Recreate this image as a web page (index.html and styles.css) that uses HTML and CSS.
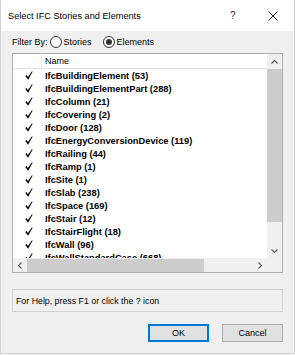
FILE: index.html
```html
<!DOCTYPE html>
<html>
<head>
<meta charset="utf-8">
<link rel="stylesheet" href="styles.css">
</head>
<body>
<div class="window">
  <div class="titlebar">
    <span class="title">Select IFC Stories and Elements</span>
    <span class="tb-help">?</span>
    <span class="tb-close"><svg width="10" height="10" viewBox="0 0 10 10"><path d="M0.5 0.5 L9.5 9.5 M9.5 0.5 L0.5 9.5" stroke="#1a1a1a" stroke-width="1" fill="none"/></svg></span>
  </div>
  <div class="content">
    <div class="filter">
      <span class="filter-label">Filter By:</span>
      <span class="radio"></span><span class="radio-label">Stories</span>
      <span class="radio checked"></span><span class="radio-label">Elements</span>
    </div>
    <div class="list">
      <div class="list-main">
        <div class="list-header">
          <div class="col-check"></div>
          <div class="col-name">Name</div>
        </div>
        <div class="rows">
          <div class="row"><span class="chk"><svg width="8" height="9" viewBox="0 0 8 9"><path d="M0.3 5 L1.6 4.1 L2.9 6.1 L7 0.2 L7.6 0.7 L3.1 8.8 Z" fill="#000"/></svg></span><span>IfcBuildingElement (53)</span></div>
          <div class="row"><span class="chk"><svg width="8" height="9" viewBox="0 0 8 9"><path d="M0.3 5 L1.6 4.1 L2.9 6.1 L7 0.2 L7.6 0.7 L3.1 8.8 Z" fill="#000"/></svg></span><span>IfcBuildingElementPart (288)</span></div>
          <div class="row"><span class="chk"><svg width="8" height="9" viewBox="0 0 8 9"><path d="M0.3 5 L1.6 4.1 L2.9 6.1 L7 0.2 L7.6 0.7 L3.1 8.8 Z" fill="#000"/></svg></span><span>IfcColumn (21)</span></div>
          <div class="row"><span class="chk"><svg width="8" height="9" viewBox="0 0 8 9"><path d="M0.3 5 L1.6 4.1 L2.9 6.1 L7 0.2 L7.6 0.7 L3.1 8.8 Z" fill="#000"/></svg></span><span>IfcCovering (2)</span></div>
          <div class="row"><span class="chk"><svg width="8" height="9" viewBox="0 0 8 9"><path d="M0.3 5 L1.6 4.1 L2.9 6.1 L7 0.2 L7.6 0.7 L3.1 8.8 Z" fill="#000"/></svg></span><span>IfcDoor (128)</span></div>
          <div class="row"><span class="chk"><svg width="8" height="9" viewBox="0 0 8 9"><path d="M0.3 5 L1.6 4.1 L2.9 6.1 L7 0.2 L7.6 0.7 L3.1 8.8 Z" fill="#000"/></svg></span><span>IfcEnergyConversionDevice (119)</span></div>
          <div class="row"><span class="chk"><svg width="8" height="9" viewBox="0 0 8 9"><path d="M0.3 5 L1.6 4.1 L2.9 6.1 L7 0.2 L7.6 0.7 L3.1 8.8 Z" fill="#000"/></svg></span><span>IfcRailing (44)</span></div>
          <div class="row"><span class="chk"><svg width="8" height="9" viewBox="0 0 8 9"><path d="M0.3 5 L1.6 4.1 L2.9 6.1 L7 0.2 L7.6 0.7 L3.1 8.8 Z" fill="#000"/></svg></span><span>IfcRamp (1)</span></div>
          <div class="row"><span class="chk"><svg width="8" height="9" viewBox="0 0 8 9"><path d="M0.3 5 L1.6 4.1 L2.9 6.1 L7 0.2 L7.6 0.7 L3.1 8.8 Z" fill="#000"/></svg></span><span>IfcSite (1)</span></div>
          <div class="row"><span class="chk"><svg width="8" height="9" viewBox="0 0 8 9"><path d="M0.3 5 L1.6 4.1 L2.9 6.1 L7 0.2 L7.6 0.7 L3.1 8.8 Z" fill="#000"/></svg></span><span>IfcSlab (238)</span></div>
          <div class="row"><span class="chk"><svg width="8" height="9" viewBox="0 0 8 9"><path d="M0.3 5 L1.6 4.1 L2.9 6.1 L7 0.2 L7.6 0.7 L3.1 8.8 Z" fill="#000"/></svg></span><span>IfcSpace (169)</span></div>
          <div class="row"><span class="chk"><svg width="8" height="9" viewBox="0 0 8 9"><path d="M0.3 5 L1.6 4.1 L2.9 6.1 L7 0.2 L7.6 0.7 L3.1 8.8 Z" fill="#000"/></svg></span><span>IfcStair (12)</span></div>
          <div class="row"><span class="chk"><svg width="8" height="9" viewBox="0 0 8 9"><path d="M0.3 5 L1.6 4.1 L2.9 6.1 L7 0.2 L7.6 0.7 L3.1 8.8 Z" fill="#000"/></svg></span><span>IfcStairFlight (18)</span></div>
          <div class="row"><span class="chk"><svg width="8" height="9" viewBox="0 0 8 9"><path d="M0.3 5 L1.6 4.1 L2.9 6.1 L7 0.2 L7.6 0.7 L3.1 8.8 Z" fill="#000"/></svg></span><span>IfcWall (96)</span></div>
          <div class="row"><span class="chk"><svg width="8" height="9" viewBox="0 0 8 9"><path d="M0.3 5 L1.6 4.1 L2.9 6.1 L7 0.2 L7.6 0.7 L3.1 8.8 Z" fill="#000"/></svg></span><span>IfcWallStandardCase (668)</span></div>
        </div>
      </div>
      <div class="vscroll">
        <span class="arrow"><svg width="7" height="4" viewBox="0 0 7 4"><path d="M0.5 3.5 L3.5 0.5 L6.5 3.5" stroke="#606060" stroke-width="1.2" fill="none"/></svg></span>
        <div class="vtrack"><div class="vthumb"></div></div>
        <span class="arrow"><svg width="7" height="4" viewBox="0 0 7 4"><path d="M0.5 0.5 L3.5 3.5 L6.5 0.5" stroke="#606060" stroke-width="1.2" fill="none"/></svg></span>
      </div>
      <div class="hscroll">
        <span class="harrow"><svg width="4" height="7" viewBox="0 0 4 7"><path d="M3.5 0.5 L0.5 3.5 L3.5 6.5" stroke="#606060" stroke-width="1.2" fill="none"/></svg></span>
        <div class="htrack"><div class="hthumb"></div></div>
        <span class="harrow"><svg width="4" height="7" viewBox="0 0 4 7"><path d="M0.5 0.5 L3.5 3.5 L0.5 6.5" stroke="#606060" stroke-width="1.2" fill="none"/></svg></span>
      </div>
      <div class="corner"></div>
    </div>
    <div class="helpbox">For Help, press F1 or click the ? icon</div>
    <div class="buttons">
      <button class="btn default">OK</button>
      <button class="btn">Cancel</button>
    </div>
  </div>
</div>
</body>
</html>
```

FILE: styles.css
```css
* { box-sizing: border-box; }
html, body { margin: 0; padding: 0; }
body {
  width: 295px;
  height: 355px;
  background: #f0f0f0;
  font-family: "Liberation Sans", Arial, sans-serif;
  font-size: 9px;
  color: #000;
  overflow: hidden;
}
.window {
  width: 295px;
  height: 354px;
  background: #f0f0f0;
  border-left: 1px solid #d4d4d4;
  border-right: 1px solid #d4d4d4;
  border-bottom: 1px solid #d4d4d4;
  display: flex;
  flex-direction: column;
}
.titlebar {
  height: 31px;
  background: #fff;
  display: flex;
  align-items: center;
  padding-left: 7px;
}
.title {
  font-size: 9.2px;
  color: #000;
  flex: 1;
}
.tb-help {
  font-size: 10px;
  color: #333;
  width: 10px;
  margin-right: 28px;
}
.tb-close {
  display: flex;
  margin-right: 16px;
}
.content {
  padding: 0 11px;
  display: flex;
  flex-direction: column;
}
.filter {
  height: 22px;
  display: flex;
  align-items: center;
}
.filter-label { margin-right: 2px; }
.radio {
  width: 12px;
  height: 12px;
  border: 1px solid #333;
  border-radius: 50%;
  background: #fff;
  display: inline-flex;
  align-items: center;
  justify-content: center;
  margin-right: 2px;
}
.radio.checked::after {
  content: "";
  width: 6px;
  height: 6px;
  border-radius: 50%;
  background: #333;
}
.radio-label { margin-right: 11px; }
.list {
  height: 220px;
  border: 1px solid #adadad;
  background: #fff;
  display: grid;
  grid-template-columns: 1fr 15px;
  grid-template-rows: 1fr 14px;
}
.list-main {
  overflow: hidden;
  background: #fff;
}
.list-header {
  height: 15px;
  display: flex;
  border-bottom: 1px solid #e5e5e5;
}
.col-check {
  width: 29px;
  border-right: 1px solid #e5e5e5;
  margin: 1px 0;
}
.col-name {
  padding-left: 3px;
  font-size: 9px;
  line-height: 14px;
  color: #000;
}
.row {
  height: 13px;
  display: flex;
  align-items: center;
  font-weight: bold;
  font-size: 9.3px;
  white-space: nowrap;
}
.chk {
  width: 32px;
  padding-left: 12px;
  display: flex;
}
.vscroll {
  background: #f0f0f0;
  display: flex;
  flex-direction: column;
  align-items: center;
}
.arrow {
  height: 15px;
  display: flex;
  align-items: center;
  justify-content: center;
}
.vtrack { flex: 1; width: 100%; }
.vthumb {
  height: 153px;
  background: #cdcdcd;
}
.hscroll {
  background: #f0f0f0;
  display: flex;
  align-items: center;
}
.harrow {
  width: 14px;
  display: flex;
  justify-content: center;
}
.htrack { flex: 1; height: 100%; display: flex; align-items: center; }
.hthumb {
  width: 177px;
  height: 13px;
  background: #cdcdcd;
}
.corner { background: #f0f0f0; }
.helpbox {
  margin-top: 16px;
  height: 23px;
  border: 1px solid #d0d0d0;
  padding-left: 3px;
  display: flex;
  align-items: center;
  font-size: 8.8px;
}
.buttons {
  margin-top: 12px;
  display: flex;
  justify-content: flex-end;
  gap: 13px;
}
.btn {
  width: 61px;
  height: 18px;
  font-family: "Liberation Sans", Arial, sans-serif;
  font-size: 9px;
  background: #e1e1e1;
  border: 1px solid #adadad;
  padding: 0;
  color: #000;
}
.btn.default {
  border: 1px solid #0078d7;
  box-shadow: inset 0 0 0 1px #0078d7;
}
```
